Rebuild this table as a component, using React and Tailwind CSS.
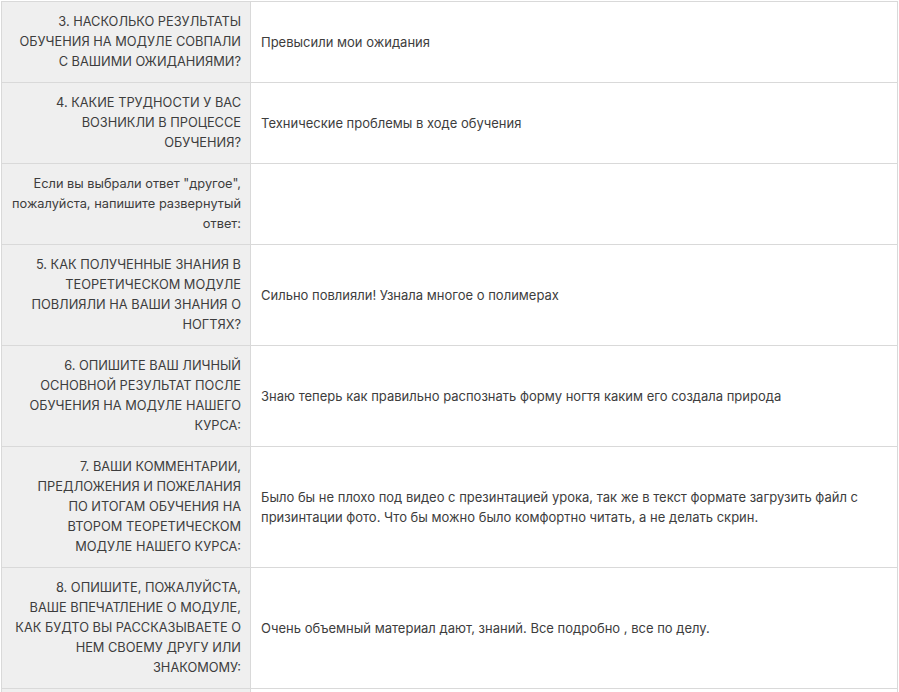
import React from 'react';

const rows = [
  {
    q: ['3. НАСКОЛЬКО РЕЗУЛЬТАТЫ', 'ОБУЧЕНИЯ НА МОДУЛЕ СОВПАЛИ', 'С ВАШИМИ ОЖИДАНИЯМИ?'],
    a: 'Превысили мои ожидания',
  },
  {
    q: ['4. КАКИЕ ТРУДНОСТИ У ВАС', 'ВОЗНИКЛИ В ПРОЦЕССЕ', 'ОБУЧЕНИЯ?'],
    a: 'Технические проблемы в ходе обучения',
  },
  {
    q: ['Если вы выбрали ответ "другое",', 'пожалуйста, напишите развернутый', 'ответ:'],
    a: '',
  },
  {
    q: ['5. КАК ПОЛУЧЕННЫЕ ЗНАНИЯ В', 'ТЕОРЕТИЧЕСКОМ МОДУЛЕ', 'ПОВЛИЯЛИ НА ВАШИ ЗНАНИЯ О', 'НОГТЯХ?'],
    a: 'Сильно повлияли! Узнала многое о полимерах',
  },
  {
    q: ['6. ОПИШИТЕ ВАШ ЛИЧНЫЙ', 'ОСНОВНОЙ РЕЗУЛЬТАТ ПОСЛЕ', 'ОБУЧЕНИЯ НА МОДУЛЕ НАШЕГО', 'КУРСА:'],
    a: 'Знаю теперь как правильно распознать форму ногтя каким его создала природа',
  },
  {
    q: [
      '7. ВАШИ КОММЕНТАРИИ,',
      'ПРЕДЛОЖЕНИЯ И ПОЖЕЛАНИЯ',
      'ПО ИТОГАМ ОБУЧЕНИЯ НА',
      'ВТОРОМ ТЕОРЕТИЧЕСКОМ',
      'МОДУЛЕ НАШЕГО КУРСА:',
    ],
    a: 'Было бы не плохо под видео с презинтацией урока, так же в текст формате загрузить файл с призинтации фото. Что бы можно было комфортно читать, а не делать скрин.',
  },
  {
    q: [
      '8. ОПИШИТЕ, ПОЖАЛУЙСТА,',
      'ВАШЕ ВПЕЧАТЛЕНИЕ О МОДУЛЕ,',
      'КАК БУДТО ВЫ РАССКАЗЫВАЕТЕ О',
      'НЕМ СВОЕМУ ДРУГУ ИЛИ',
      'ЗНАКОМОМУ:',
    ],
    a: 'Очень объемный материал дают, знаний. Все подробно , все по делу.',
  },
  { q: ['\u00a0'], a: '' },
];

export default function App() {
  return (
    <div className="bg-white h-[692px] overflow-hidden font-['Inter',sans-serif] text-[13px] leading-5 text-[#3d3d3d]">
      <table className="w-[897px] border-collapse mt-px ml-px">
        <tbody>
          {rows.map((r, i) => (
            <tr key={i}>
              <td className="w-[249px] border border-[#d9d9d9] bg-[#efefef] pl-[10px] pr-[9px] py-[10px] text-right align-middle text-[12.8px]">
                {r.q.map((line, j) => (
                  <div key={j} className="whitespace-nowrap">{line}</div>
                ))}
              </td>
              <td className="border border-[#d9d9d9] px-[10px] py-[10px] align-middle">{r.a}</td>
            </tr>
          ))}
        </tbody>
      </table>
    </div>
  );
}
